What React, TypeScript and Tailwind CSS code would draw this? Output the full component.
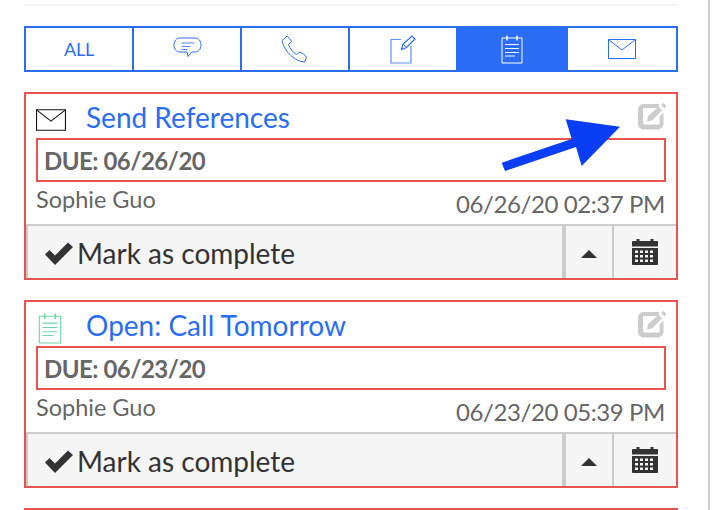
import { ReactNode } from "react";

const font = { fontFamily: "Lato, sans-serif" };

function ChatIcon() {
  return (
    <svg width="29" height="24" viewBox="0 0 29 24" fill="none" stroke="#2a6df4" strokeWidth="1">
      <path d="M7 1h15c3.500 0 6 2.800 6 7s-2.500 7-6 7h-3.500l-3.500 4.500-.8-4.500H7c-3.500 0-6-2.800-6-7s2.500-7 6-7z" />
      <path d="M8.500 6h13M8.500 9.500h9M8.500 12.500h6" opacity="0.8" />
    </svg>
  );
}

function PhoneIcon() {
  return (
    <svg width="29" height="29" viewBox="0 0 29 29" fill="none" stroke="#2a6df4" strokeWidth="1">
      <path d="M1 5.500 6 1c1 .5 3.500 3.500 4.500 5.500l-3 3c1 3.500 5 8.500 8 10l3.500-2.500c2 .8 5 3 6.500 5L23.500 27C15 27 3 17 1 5.500z" />
    </svg>
  );
}

function NoteIcon() {
  return (
    <svg width="26" height="29" viewBox="0 0 26 29" fill="none" stroke="#5b92f7">
      <path d="M11 4.500H1v23.500h20V11" strokeWidth="1.200" />
      <path d="M11.500 14.500l1.500-5.500 9-8 3 3-8.500 8.500z" stroke="#2a6df4" strokeWidth="1.200" />
      <path d="M13 9l4 4" stroke="#2a6df4" strokeWidth="1" />
    </svg>
  );
}

function NotepadIcon({ color, width = 22, height = 29 }: { color: string; width?: number; height?: number }) {
  return (
    <svg width={width} height={height} viewBox="0 0 22 29" fill="none" stroke={color} strokeWidth="1">
      <path d="M1 3h20v25H1z" />
      <path d="M6 .5v5M16 .5v5" strokeWidth="1.500" />
      <path d="M4 9.500h14M4 13.500h14M4 17.500h14M4 21h10" />
    </svg>
  );
}

function MailIcon({ color, width = 28, height = 20 }: { color: string; width?: number; height?: number }) {
  return (
    <svg width={width} height={height} viewBox="0 0 28 20" fill="none" stroke={color} strokeWidth="1">
      <path d="M.5.500h27v19H.5z" />
      <path d="M.5.500 14 11 27.500.500" />
    </svg>
  );
}

function EditIcon() {
  return (
    <svg width="29" height="27" viewBox="0 0 29 27" fill="#cccccc">
      <path d="M6 1h15v4H6.500C5.500 5 5 5.500 5 6.500v13.500c0 1 .5 1.500 1.500 1.500h13.500c1 0 1.500-.5 1.500-1.500v-6.500l4-4V20.500c0 3.500-2.500 6-6 6H6c-3.500 0-6-2.500-6-6V7c0-3.500 2.500-6 6-6z" />
      <path d="M10 13 20.500 4l3.500 3.500-10 10-5 1z" />
      <path d="M23 2l2.500-2 3 3-2 2.500z" />
    </svg>
  );
}

function CheckIcon() {
  return (
    <svg width="28" height="24" viewBox="0 0 28 24" fill="#333333">
      <path d="M0 13.500 4.500 9l5.500 5.500L23 1.500 28 6 10 24z" />
    </svg>
  );
}

function CalendarIcon() {
  return (
    <svg width="26" height="28" viewBox="0 0 26 28" fill="#333333">
      <path d="M1 4h3.500V2h3v2h11V2h3v2H25c.6 0 1 .4 1 1v4.500H0V5c0-.6.400-1 1-1z" />
      <path
        fillRule="evenodd"
        d="M0 11h26v16c0 .6-.4 1-1 1H1c-.6 0-1-.4-1-1zM3 13.500v2.500h3v-2.500zm5 0v2.500h3v-2.500zm5 0v2.500h3v-2.500zm5 0v2.500h3v-2.500zM3 18v2.500h3V18zm5 0v2.500h3V18zm5 0v2.500h3V18zm5 0v2.500h3V18zM3 22.500V25h3v-2.500zm5 0V25h3v-2.500zm5 0V25h3v-2.500zm5 0V25h3v-2.500z"
      />
    </svg>
  );
}

function Tab({ children, className }: { children: ReactNode; className: string }) {
  return <div className={`flex items-center justify-center ${className}`}>{children}</div>;
}

function TaskCard(props: { icon: ReactNode; title: string; due: string; date: string }) {
  return (
    <div className="mb-[20px] flex h-[188px] flex-col border-2 border-[#ea5450]">
      <div className="relative flex h-[44px] shrink-0 items-center pl-[10px]">
        <div className="flex w-[50px] justify-start">{props.icon}</div>
        <span className="pt-[2px] text-[28px] leading-none text-[#2a6df4]">{props.title}</span>
        <div className="absolute right-[9px] top-[9px]">
          <EditIcon />
        </div>
      </div>
      <div className="mx-[10px] flex h-[44px] shrink-0 items-center border-2 border-[#ea5450] pl-[6px] pt-[2px] text-[24px] font-bold tracking-[-0.5px] text-[#666666]">
        DUE: {props.due}
      </div>
      <div className="flex h-[42px] shrink-0 justify-between pl-[10px] pr-[11px] text-[#666666]">
        <span className="pt-[2px] text-[23.5px] leading-[30px]">Sophie Guo</span>
        <span className="pt-[7px] text-[24px] leading-[30px] tracking-[-0.41px]">{props.date}</span>
      </div>
      <div className="flex min-h-0 flex-1 border-l-2 border-t-2 border-[#cccccc] bg-[#f5f5f5] text-[#333333]">
        <div className="flex w-[534px] items-center gap-[4px] pl-[17px] pt-[2px] text-[28px]">
          <CheckIcon />
          <span>Mark as complete</span>
        </div>
        <div className="flex w-[52px] items-center justify-center border-l-[4px] border-r-2 border-[#cccccc]">
          <div className="mt-[4px] h-0 w-0 border-x-[8px] border-b-[8px] border-x-transparent border-b-[#333333]" />
        </div>
        <div className="flex flex-1 items-center justify-center pb-[2px]">
          <CalendarIcon />
        </div>
      </div>
    </div>
  );
}

export default function App() {
  return (
    <div className="relative h-[510px] w-[712px] overflow-hidden bg-white" style={font}>
      <div className="flex h-full">
        <div className="w-[708px] pl-[24px] pr-[30px]">
          <div className="mt-[4px] h-[2px] bg-[#f5f5f5]" />
          <div className="mb-[20px] mt-[20px] flex h-[46px] border-2 border-[#2a6df4]">
            <Tab className="w-[108px] border-r-2 border-[#2a6df4]">
              <span className="text-[18px] tracking-[-0.3px] text-[#2a6df4]">ALL</span>
            </Tab>
            <Tab className="w-[108px] border-r-2 border-[#2a6df4]">
              <ChatIcon />
            </Tab>
            <Tab className="w-[108px] border-r-2 border-[#2a6df4]">
              <PhoneIcon />
            </Tab>
            <Tab className="w-[106px]">
              <NoteIcon />
            </Tab>
            <Tab className="w-[112px] bg-[#2a6df4]">
              <NotepadIcon color="#ffffff" />
            </Tab>
            <Tab className="flex-1">
              <MailIcon color="#2a6df4" />
            </Tab>
          </div>
          <TaskCard
            icon={
              <div className="pt-[7px]">
                <MailIcon color="#111111" width={30} height={22} />
              </div>
            }
            title="Send References"
            due="06/26/20"
            date="06/26/20 02:37 PM"
          />
          <TaskCard
            icon={
              <div className="pl-[2px] pt-[8px]">
                <NotepadIcon color="#6fd3a5" width={24} height={31} />
              </div>
            }
            title="Open: Call Tomorrow"
            due="06/23/20"
            date="06/23/20 05:39 PM"
          />
          <div className="h-[40px] border-2 border-[#ea5450]" />
        </div>
        <div className="w-[2px] shrink-0 bg-[#cccccc]" />
      </div>
      {/* annotation arrow on top of the first card */}
      <svg className="absolute left-0 top-0" width="712" height="510" fill="#0a3ef5">
        <polygon points="565.700,119.300 620,126.700 581.700,166 576,147 505,171 501.700,162.700 571.700,139" />
      </svg>
    </div>
  );
}
